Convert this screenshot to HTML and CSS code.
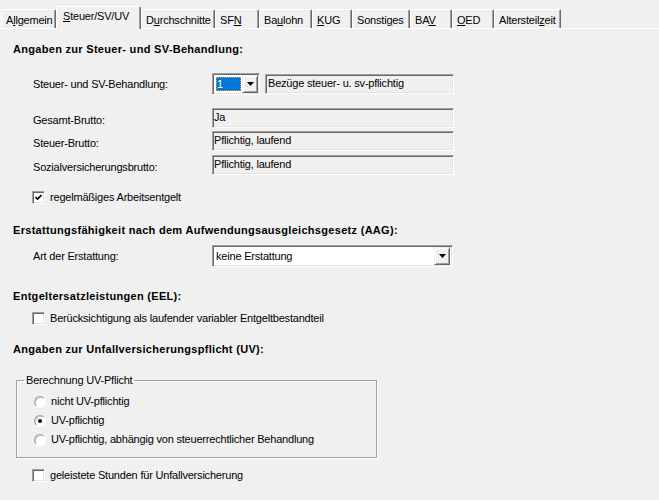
FILE: index.html
```html
<!DOCTYPE html>
<html lang="de">
<head>
<meta charset="utf-8">
<title>Steuer/SV/UV</title>
<link rel="stylesheet" href="styles.css">
</head>
<body>
<div class="tabs">
  <div class="tab tab-allg">A<u>l</u>lgemein</div>
  <div class="tab tab-active tab-steuer"><u>S</u>teuer/SV/UV</div>
  <div class="tab tab-durch">D<u>u</u>rchschnitte</div>
  <div class="tab tab-sfn">SF<u>N</u></div>
  <div class="tab tab-bau">Ba<u>u</u>lohn</div>
  <div class="tab tab-kug"><u>K</u>UG</div>
  <div class="tab tab-sonst">Sonsti<u>g</u>es</div>
  <div class="tab tab-bav">BA<u>V</u></div>
  <div class="tab tab-oed"><u>O</u>ED</div>
  <div class="tab tab-ats">Altersteil<u>z</u>eit</div>
</div>
<div class="panel">
  <div class="heading heading-sv">Angaben zur Steuer- und SV-Behandlung:</div>

  <div class="row row-combo">
    <div class="label">Steuer- und SV-Behandlung:</div>
    <div class="combo">
      <div class="combo-sel"><span class="sel">1</span></div>
      <div class="btn"><svg width="7" height="4" viewBox="0 0 7 4"><polygon points="0,0 7,0 3.5,4" fill="#000"/></svg></div>
    </div>
    <div class="field field-desc">Bezüge steuer- u. sv-pflichtig</div>
  </div>

  <div class="row row-field row-f1">
    <div class="label label-low">Gesamt-Brutto:</div>
    <div class="field">Ja</div>
  </div>
  <div class="row row-field row-f2">
    <div class="label label-low">Steuer-Brutto:</div>
    <div class="field">Pflichtig, laufend</div>
  </div>
  <div class="row row-field row-f3">
    <div class="label label-low">Sozialversicherungsbrutto:</div>
    <div class="field">Pflichtig, laufend</div>
  </div>

  <div class="check-row check-regel">
    <span class="cb"><svg width="7" height="7" viewBox="0 0 7 7"><polyline points="0.5,3 2.5,5 6.5,1" fill="none" stroke="#000" stroke-width="1.7"/></svg></span>
    <span>regelmäßiges Arbeitsentgelt</span>
  </div>

  <div class="heading heading-aag">Erstattungsfähigkeit nach dem Aufwendungsausgleichsgesetz (AAG):</div>
  <div class="row row-select">
    <div class="label">Art der Erstattung:</div>
    <div class="select">
      <div class="select-text">keine Erstattung</div>
      <div class="btn"><svg width="7" height="4" viewBox="0 0 7 4"><polygon points="0,0 7,0 3.5,4" fill="#000"/></svg></div>
    </div>
  </div>

  <div class="heading heading-eel">Entgeltersatzleistungen (EEL):</div>
  <div class="check-row check-eel">
    <span class="cb"></span>
    <span>Berücksichtigung als laufender variabler Entgeltbestandteil</span>
  </div>

  <div class="heading heading-uv">Angaben zur Unfallversicherungspflicht (UV):</div>
  <fieldset class="group">
    <legend>Berechnung UV-Pflicht</legend>
    <div class="radio-row"><span class="rb"></span><span>nicht UV-pflichtig</span></div>
    <div class="radio-row"><span class="rb rb-checked"></span><span>UV-pflichtig</span></div>
    <div class="radio-row"><span class="rb"></span><span>UV-pflichtig, abhängig von steuerrechtlicher Behandlung</span></div>
  </fieldset>

  <div class="check-row check-stunden">
    <span class="cb"></span>
    <span>geleistete Stunden für Unfallversicherung</span>
  </div>
</div>
</body>
</html>
```
FILE: styles.css
```css
html, body {
  margin: 0;
  padding: 0;
}
body {
  width: 659px;
  height: 500px;
  overflow: hidden;
  background: #f0f0f0;
  color: #000;
  font-family: "Liberation Sans", Arial, sans-serif;
  font-size: 11px;
  line-height: 13px;
  letter-spacing: -0.2px;
}
u {
  text-decoration: underline;
  text-underline-offset: 1px;
}

/* ---------- tabs ---------- */
.tabs {
  display: flex;
  align-items: flex-end;
  height: 28px;
  padding-left: 1px;
  border-bottom: 1px solid #fff;
}
.tab {
  box-sizing: border-box;
  height: 19px;
  padding: 4px 0 0 4px;
  border-top: 1px solid #fff;
  border-left: 1px solid #fff;
  border-right: 1px solid #696969;
  border-radius: 2px 2px 0 0;
  box-shadow: inset -1px 0 #a0a0a0;
  white-space: nowrap;
  background: #f0f0f0;
}
.tab-active {
  height: 23px;
  margin-bottom: -1px;
  padding: 3px 0 0 6px;
}
.tab-allg { width: 55px; }
.tab-steuer { width: 85px; }
.tab-durch { width: 74px; }
.tab-sfn { width: 44px; }
.tab-bau { width: 53px; }
.tab-kug { width: 40px; }
.tab-sonst { width: 58px; }
.tab-bav { width: 42px; }
.tab-oed { width: 42px; }
.tab-ats { width: 67px; }

/* ---------- panel ---------- */
.panel {
  padding-left: 13px;
}
.heading {
  font-weight: bold;
  height: 13px;
  letter-spacing: 0.3px;
  white-space: nowrap;
}
.heading-sv { margin-top: 14px; }
.heading-aag { margin-top: 20px; }
.heading-eel { margin-top: 23px; }
.heading-uv { margin-top: 18px; }

.row {
  display: flex;
  align-items: center;
}
.label {
  width: 179px;
  padding-left: 20px;
  white-space: nowrap;
}
.label-low {
  padding-top: 4px;
}
.row-combo {
  height: 22px;
  margin-top: 17px;
}
.row-field { height: 20px; }
.row-f1 { margin-top: 13px; }
.row-f2 { margin-top: 3px; }
.row-f3 { margin-top: 4px; }
.row-select {
  height: 22px;
  margin-top: 8px;
}

/* sunken boxes */
.field, .combo, .select {
  box-sizing: border-box;
  border: 1px solid;
  border-color: #a0a0a0 #fff #fff #a0a0a0;
  box-shadow: inset 1px 1px #696969, inset -1px -1px #e3e3e3;
}
.field {
  width: 242px;
  height: 20px;
  padding: 2px 2px 0 1px;
  white-space: nowrap;
}
.field-desc {
  width: 189px;
  margin-left: 5px;
  padding-left: 2px;
}
.combo {
  display: flex;
  width: 48px;
  height: 22px;
  padding: 1px;
  background: #fff;
}
.combo-sel {
  flex: 1;
  padding: 2px 1px 2px 2px;
  display: flex;
}
.sel {
  flex: 1;
  background: #0078d7;
  color: #fff;
  outline: 1px dotted #e0a040;
  outline-offset: -1px;
  padding-left: 1px;
  line-height: 14px;
}
.btn {
  box-sizing: border-box;
  width: 16px;
  height: 18px;
  border: 1px solid;
  border-color: #f0f0f0 #696969 #696969 #f0f0f0;
  box-shadow: inset 1px 1px #fff, inset -1px -1px #a0a0a0;
  background: #f0f0f0;
  display: flex;
  align-items: center;
  justify-content: center;
}
.btn svg { display: block; }
.select {
  display: flex;
  align-items: center;
  width: 241px;
  height: 22px;
  padding: 1px 2px 1px 1px;
  background: #fff;
}
.select-text {
  flex: 1;
  padding-left: 2px;
  white-space: nowrap;
}

/* checkboxes */
.check-row {
  display: flex;
  align-items: center;
  gap: 5px;
  height: 13px;
  padding-left: 19px;
  white-space: nowrap;
}
.check-regel { margin-top: 16px; }
.check-eel { margin-top: 9px; }
.check-stunden { margin-top: 11px; }
.cb {
  box-sizing: border-box;
  width: 13px;
  height: 13px;
  flex: none;
  border: 1px solid;
  border-color: #a0a0a0 #fff #fff #a0a0a0;
  box-shadow: inset 1px 1px #696969, inset -1px -1px #e3e3e3;
  background: #fff;
  display: flex;
  align-items: center;
  justify-content: center;
}
.cb svg { display: block; }

/* group box */
.group {
  margin: 18px 0 0 3px;
  padding: 5px 0 8px 0;
  width: 359px;
  min-width: 0;
  border: 1px solid #a0a0a0;
  box-shadow: inset 1px 1px #fff, 1px 1px #fff;
}
.group legend {
  margin-left: 7px;
  padding: 0 2px;
  line-height: 13px;
}
.radio-row {
  display: flex;
  align-items: center;
  gap: 5px;
  height: 19px;
  padding-left: 17px;
  white-space: nowrap;
}
.rb {
  box-sizing: border-box;
  position: relative;
  width: 12px;
  height: 12px;
  flex: none;
  border-radius: 50%;
  border: 1px solid;
  border-color: #a0a0a0 #fff #fff #a0a0a0;
  box-shadow: inset 1px 1px #c8c8c8;
  background: #fff;
}
.rb-checked::after {
  content: "";
  position: absolute;
  left: 3px;
  top: 3px;
  width: 4px;
  height: 4px;
  border-radius: 50%;
  background: #000;
}
```
